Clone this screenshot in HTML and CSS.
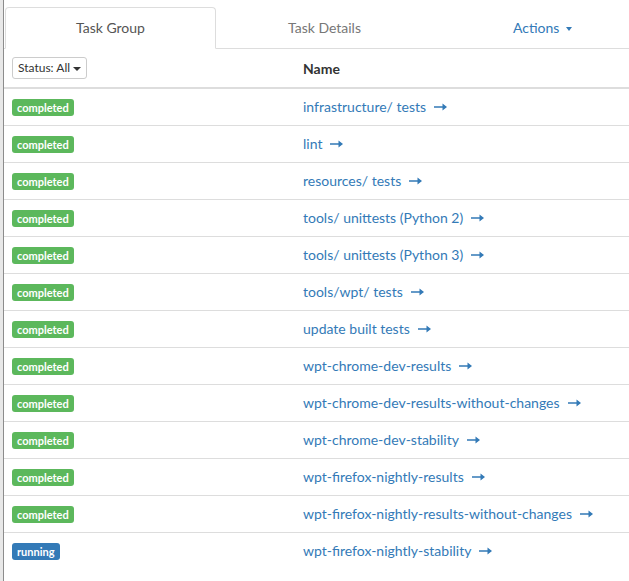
FILE: index.html
```html
<!DOCTYPE html>
<html lang="en">
<head>
<meta charset="utf-8">
<title>Task Group</title>
<link rel="stylesheet" href="styles.css">
</head>
<body>
<div class="page">
<ul class="tabs">
<li class="active"><a href="#">Task Group</a></li>
<li><a href="#" class="muted">Task Details</a></li>
<li class="menu"><a href="#">Actions <span class="caret"></span></a></li>
</ul>
<table class="tasks">
<thead>
<tr>
<th class="col-status"><button type="button" class="filter">Status: All <span class="caret"></span></button></th>
<th>Name</th>
</tr>
</thead>
<tbody>
<tr><td><span class="label ok">completed</span></td><td><a href="#">infrastructure/ tests</a><svg class="arrow" viewBox="0 0 13 8"><path d="M0 3.2h8.5V0.6L13 4 8.5 7.4V4.8H0z"/></svg></td></tr>
<tr><td><span class="label ok">completed</span></td><td><a href="#">lint</a><svg class="arrow" viewBox="0 0 13 8"><path d="M0 3.2h8.5V0.6L13 4 8.5 7.4V4.8H0z"/></svg></td></tr>
<tr><td><span class="label ok">completed</span></td><td><a href="#">resources/ tests</a><svg class="arrow" viewBox="0 0 13 8"><path d="M0 3.2h8.5V0.6L13 4 8.5 7.4V4.8H0z"/></svg></td></tr>
<tr><td><span class="label ok">completed</span></td><td><a href="#">tools/ unittests (Python 2)</a><svg class="arrow" viewBox="0 0 13 8"><path d="M0 3.2h8.5V0.6L13 4 8.5 7.4V4.8H0z"/></svg></td></tr>
<tr><td><span class="label ok">completed</span></td><td><a href="#">tools/ unittests (Python 3)</a><svg class="arrow" viewBox="0 0 13 8"><path d="M0 3.2h8.5V0.6L13 4 8.5 7.4V4.8H0z"/></svg></td></tr>
<tr><td><span class="label ok">completed</span></td><td><a href="#">tools/wpt/ tests</a><svg class="arrow" viewBox="0 0 13 8"><path d="M0 3.2h8.5V0.6L13 4 8.5 7.4V4.8H0z"/></svg></td></tr>
<tr><td><span class="label ok">completed</span></td><td><a href="#">update built tests</a><svg class="arrow" viewBox="0 0 13 8"><path d="M0 3.2h8.5V0.6L13 4 8.5 7.4V4.8H0z"/></svg></td></tr>
<tr><td><span class="label ok">completed</span></td><td><a href="#">wpt-chrome-dev-results</a><svg class="arrow" viewBox="0 0 13 8"><path d="M0 3.2h8.5V0.6L13 4 8.5 7.4V4.8H0z"/></svg></td></tr>
<tr><td><span class="label ok">completed</span></td><td><a href="#">wpt-chrome-dev-results-without-changes</a><svg class="arrow" viewBox="0 0 13 8"><path d="M0 3.2h8.5V0.6L13 4 8.5 7.4V4.8H0z"/></svg></td></tr>
<tr><td><span class="label ok">completed</span></td><td><a href="#">wpt-chrome-dev-stability</a><svg class="arrow" viewBox="0 0 13 8"><path d="M0 3.2h8.5V0.6L13 4 8.5 7.4V4.8H0z"/></svg></td></tr>
<tr><td><span class="label ok">completed</span></td><td><a href="#">wpt-firefox-nightly-results</a><svg class="arrow" viewBox="0 0 13 8"><path d="M0 3.2h8.5V0.6L13 4 8.5 7.4V4.8H0z"/></svg></td></tr>
<tr><td><span class="label ok">completed</span></td><td><a href="#">wpt-firefox-nightly-results-without-changes</a><svg class="arrow" viewBox="0 0 13 8"><path d="M0 3.2h8.5V0.6L13 4 8.5 7.4V4.8H0z"/></svg></td></tr>
<tr><td><span class="label run">running</span></td><td><a href="#">wpt-firefox-nightly-stability</a><svg class="arrow" viewBox="0 0 13 8"><path d="M0 3.2h8.5V0.6L13 4 8.5 7.4V4.8H0z"/></svg></td></tr>
</tbody>
</table>
</div>
</body>
</html>
```

FILE: styles.css
```css
html {
    overflow: hidden;
}

body {
    margin: 0;
    background: #e8e8e8;
    font-family: Lato, "Liberation Sans", sans-serif;
    font-size: 14px;
    line-height: 20px;
    color: #333;
}

.page {
    margin-left: 3px;
    min-height: 581px;
    background: #fff;
    border-left: 1px solid #8c8c8c;
    padding-top: 7px;
    overflow: hidden;
}

a {
    color: #337ab7;
    text-decoration: none;
}

.tabs {
    list-style: none;
    margin: 0;
    padding: 0 0 0 1px;
    display: flex;
    width: 700px;
    border-bottom: 1px solid #ddd;
}

.tabs li {
    flex: 0 0 211px;
    margin-right: 3px;
    margin-bottom: -1px;
}

.tabs a {
    display: block;
    text-align: center;
    padding: 10px 15px;
    border: 1px solid transparent;
    border-radius: 4px 4px 0 0;
}

.tabs .menu a {
    padding-left: 23px;
}

.tabs .menu .caret {
    margin-left: 3px;
    border-top-width: 4px;
    border-left-width: 3.5px;
    border-right-width: 3.5px;
}

.tabs .active a {
    color: #555;
    border-color: #ddd;
    border-bottom-color: #fff;
    background: #fff;
}

.tabs a.muted {
    color: #777;
}

.caret {
    display: inline-block;
    width: 0;
    height: 0;
    margin-left: 2px;
    vertical-align: middle;
    border-top: 4px solid;
    border-left: 4px solid transparent;
    border-right: 4px solid transparent;
}

.tasks {
    width: 625px;
    border-collapse: collapse;
}

.tasks th,
.tasks td {
    padding: 8px;
    text-align: left;
    vertical-align: middle;
}

.tasks th {
    font-weight: bold;
    vertical-align: bottom;
    border-bottom: 2px solid #ddd;
}

.tasks td {
    border-top: 1px solid #ddd;
}

.tasks tbody tr:first-child td {
    border-top: 0;
}

.col-status {
    width: 275px;
}

.filter {
    font-family: inherit;
    font-size: 12px;
    line-height: 1.5;
    color: #333;
    background: #fff;
    border: 1px solid #ccc;
    border-radius: 3px;
    padding: 1px 5px;
    height: 22px;
    display: block;
}

.filter .caret {
    margin-left: 0;
}

.label {
    display: inline-block;
    font-size: 11px;
    font-weight: bold;
    line-height: 1;
    color: #fff;
    padding: 3px 5px 3px;
    border-radius: 3px;
    vertical-align: 0;
}

.label.ok {
    background: #5cb85c;
}

.label.run {
    background: #337ab7;
}

.arrow {
    width: 13px;
    height: 8px;
    margin-left: 8px;
    fill: #337ab7;
    vertical-align: 1px;
}
```
